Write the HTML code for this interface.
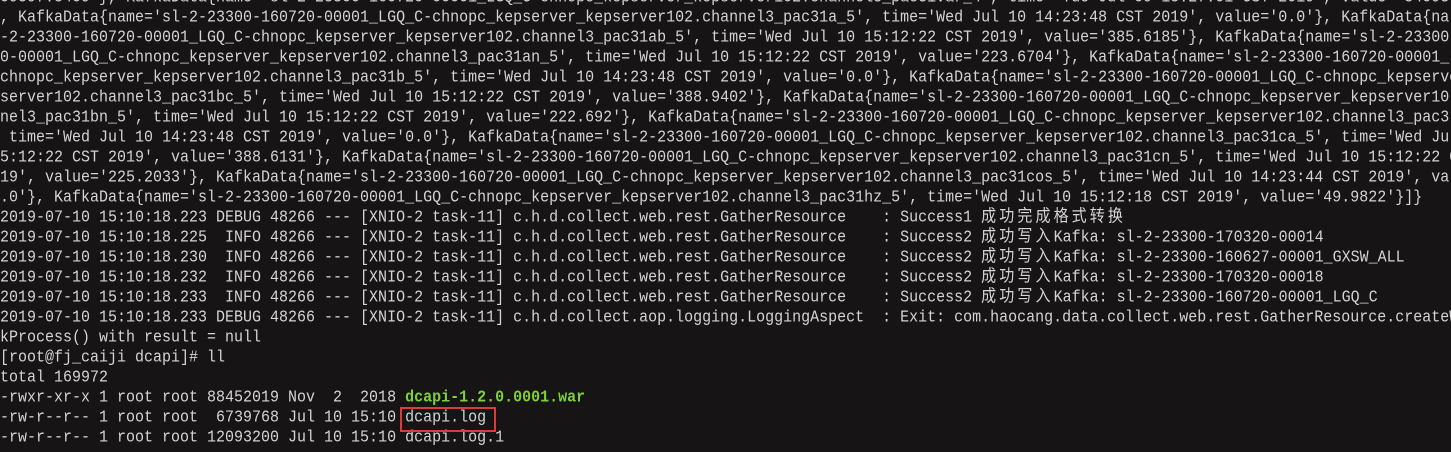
<!DOCTYPE html>
<html><head><meta charset="utf-8"><style>
html,body{margin:0;padding:0;background:#161414;width:1451px;height:452px;overflow:hidden;position:relative}
.t{position:absolute;left:0;top:-12px;font-family:"Liberation Mono","Noto Sans CJK SC",monospace;font-size:15px;line-height:20px;color:#d4d4d4}
.t div{height:20px;white-space:pre;transform:scaleY(1.12)}
.c{letter-spacing:3.1px}
.g{color:#7fd03a;font-weight:bold}
.box{position:absolute;left:400px;top:407px;width:92px;height:21px;border:2px solid #e0393a}
</style></head><body>
<div class="t">
<div>09597.5409'}, KafkaData{name='sl-2-23300-160720-00001_LGQ_C-chnopc_kepserver_kepserver102.channel3_pac31var_4', time='Tue Jul 09 15:27:01 CST 2019', value='54093</div>
<div>, KafkaData{name='sl-2-23300-160720-00001_LGQ_C-chnopc_kepserver_kepserver102.channel3_pac31a_5', time='Wed Jul 10 14:23:48 CST 2019', value='0.0'}, KafkaData{na</div>
<div>-2-23300-160720-00001_LGQ_C-chnopc_kepserver_kepserver102.channel3_pac31ab_5', time='Wed Jul 10 15:12:22 CST 2019', value='385.6185'}, KafkaData{name='sl-2-23300</div>
<div>0-00001_LGQ_C-chnopc_kepserver_kepserver102.channel3_pac31an_5', time='Wed Jul 10 15:12:22 CST 2019', value='223.6704'}, KafkaData{name='sl-2-23300-160720-00001_L</div>
<div>chnopc_kepserver_kepserver102.channel3_pac31b_5', time='Wed Jul 10 14:23:48 CST 2019', value='0.0'}, KafkaData{name='sl-2-23300-160720-00001_LGQ_C-chnopc_kepserver</div>
<div>server102.channel3_pac31bc_5', time='Wed Jul 10 15:12:22 CST 2019', value='388.9402'}, KafkaData{name='sl-2-23300-160720-00001_LGQ_C-chnopc_kepserver_kepserver10</div>
<div>nel3_pac31bn_5', time='Wed Jul 10 15:12:22 CST 2019', value='222.692'}, KafkaData{name='sl-2-23300-160720-00001_LGQ_C-chnopc_kepserver_kepserver102.channel3_pac3</div>
<div> time='Wed Jul 10 14:23:48 CST 2019', value='0.0'}, KafkaData{name='sl-2-23300-160720-00001_LGQ_C-chnopc_kepserver_kepserver102.channel3_pac31ca_5', time='Wed Ju</div>
<div>5:12:22 CST 2019', value='388.6131'}, KafkaData{name='sl-2-23300-160720-00001_LGQ_C-chnopc_kepserver_kepserver102.channel3_pac31cn_5', time='Wed Jul 10 15:12:22 C</div>
<div>19', value='225.2033'}, KafkaData{name='sl-2-23300-160720-00001_LGQ_C-chnopc_kepserver_kepserver102.channel3_pac31cos_5', time='Wed Jul 10 14:23:44 CST 2019', val</div>
<div>.0'}, KafkaData{name='sl-2-23300-160720-00001_LGQ_C-chnopc_kepserver_kepserver102.channel3_pac31hz_5', time='Wed Jul 10 15:12:18 CST 2019', value='49.9822'}]}</div>
<div>2019-07-10 15:10:18.223 DEBUG 48266 --- [XNIO-2 task-11] c.h.d.collect.web.rest.GatherResource    : Success1 <span class="c">成功完成格式转换</span></div>
<div>2019-07-10 15:10:18.225  INFO 48266 --- [XNIO-2 task-11] c.h.d.collect.web.rest.GatherResource    : Success2 <span class="c">成功写入</span>Kafka: sl-2-23300-170320-00014</div>
<div>2019-07-10 15:10:18.230  INFO 48266 --- [XNIO-2 task-11] c.h.d.collect.web.rest.GatherResource    : Success2 <span class="c">成功写入</span>Kafka: sl-2-23300-160627-00001_GXSW_ALL</div>
<div>2019-07-10 15:10:18.232  INFO 48266 --- [XNIO-2 task-11] c.h.d.collect.web.rest.GatherResource    : Success2 <span class="c">成功写入</span>Kafka: sl-2-23300-170320-00018</div>
<div>2019-07-10 15:10:18.233  INFO 48266 --- [XNIO-2 task-11] c.h.d.collect.web.rest.GatherResource    : Success2 <span class="c">成功写入</span>Kafka: sl-2-23300-160720-00001_LGQ_C</div>
<div>2019-07-10 15:10:18.233 DEBUG 48266 --- [XNIO-2 task-11] c.h.d.collect.aop.logging.LoggingAspect  : Exit: com.haocang.data.collect.web.rest.GatherResource.createWor</div>
<div>kProcess() with result = null</div>
<div>[root@fj_caiji dcapi]# ll</div>
<div>total 169972</div>
<div>-rwxr-xr-x 1 root root 88452019 Nov  2  2018 <span class="g">dcapi-1.2.0.0001.war</span></div>
<div>-rw-r--r-- 1 root root  6739768 Jul 10 15:10 dcapi.log</div>
<div>-rw-r--r-- 1 root root 12093200 Jul 10 15:10 dcapi.log.1</div>
</div>
<div class="box"></div>
</body></html>
